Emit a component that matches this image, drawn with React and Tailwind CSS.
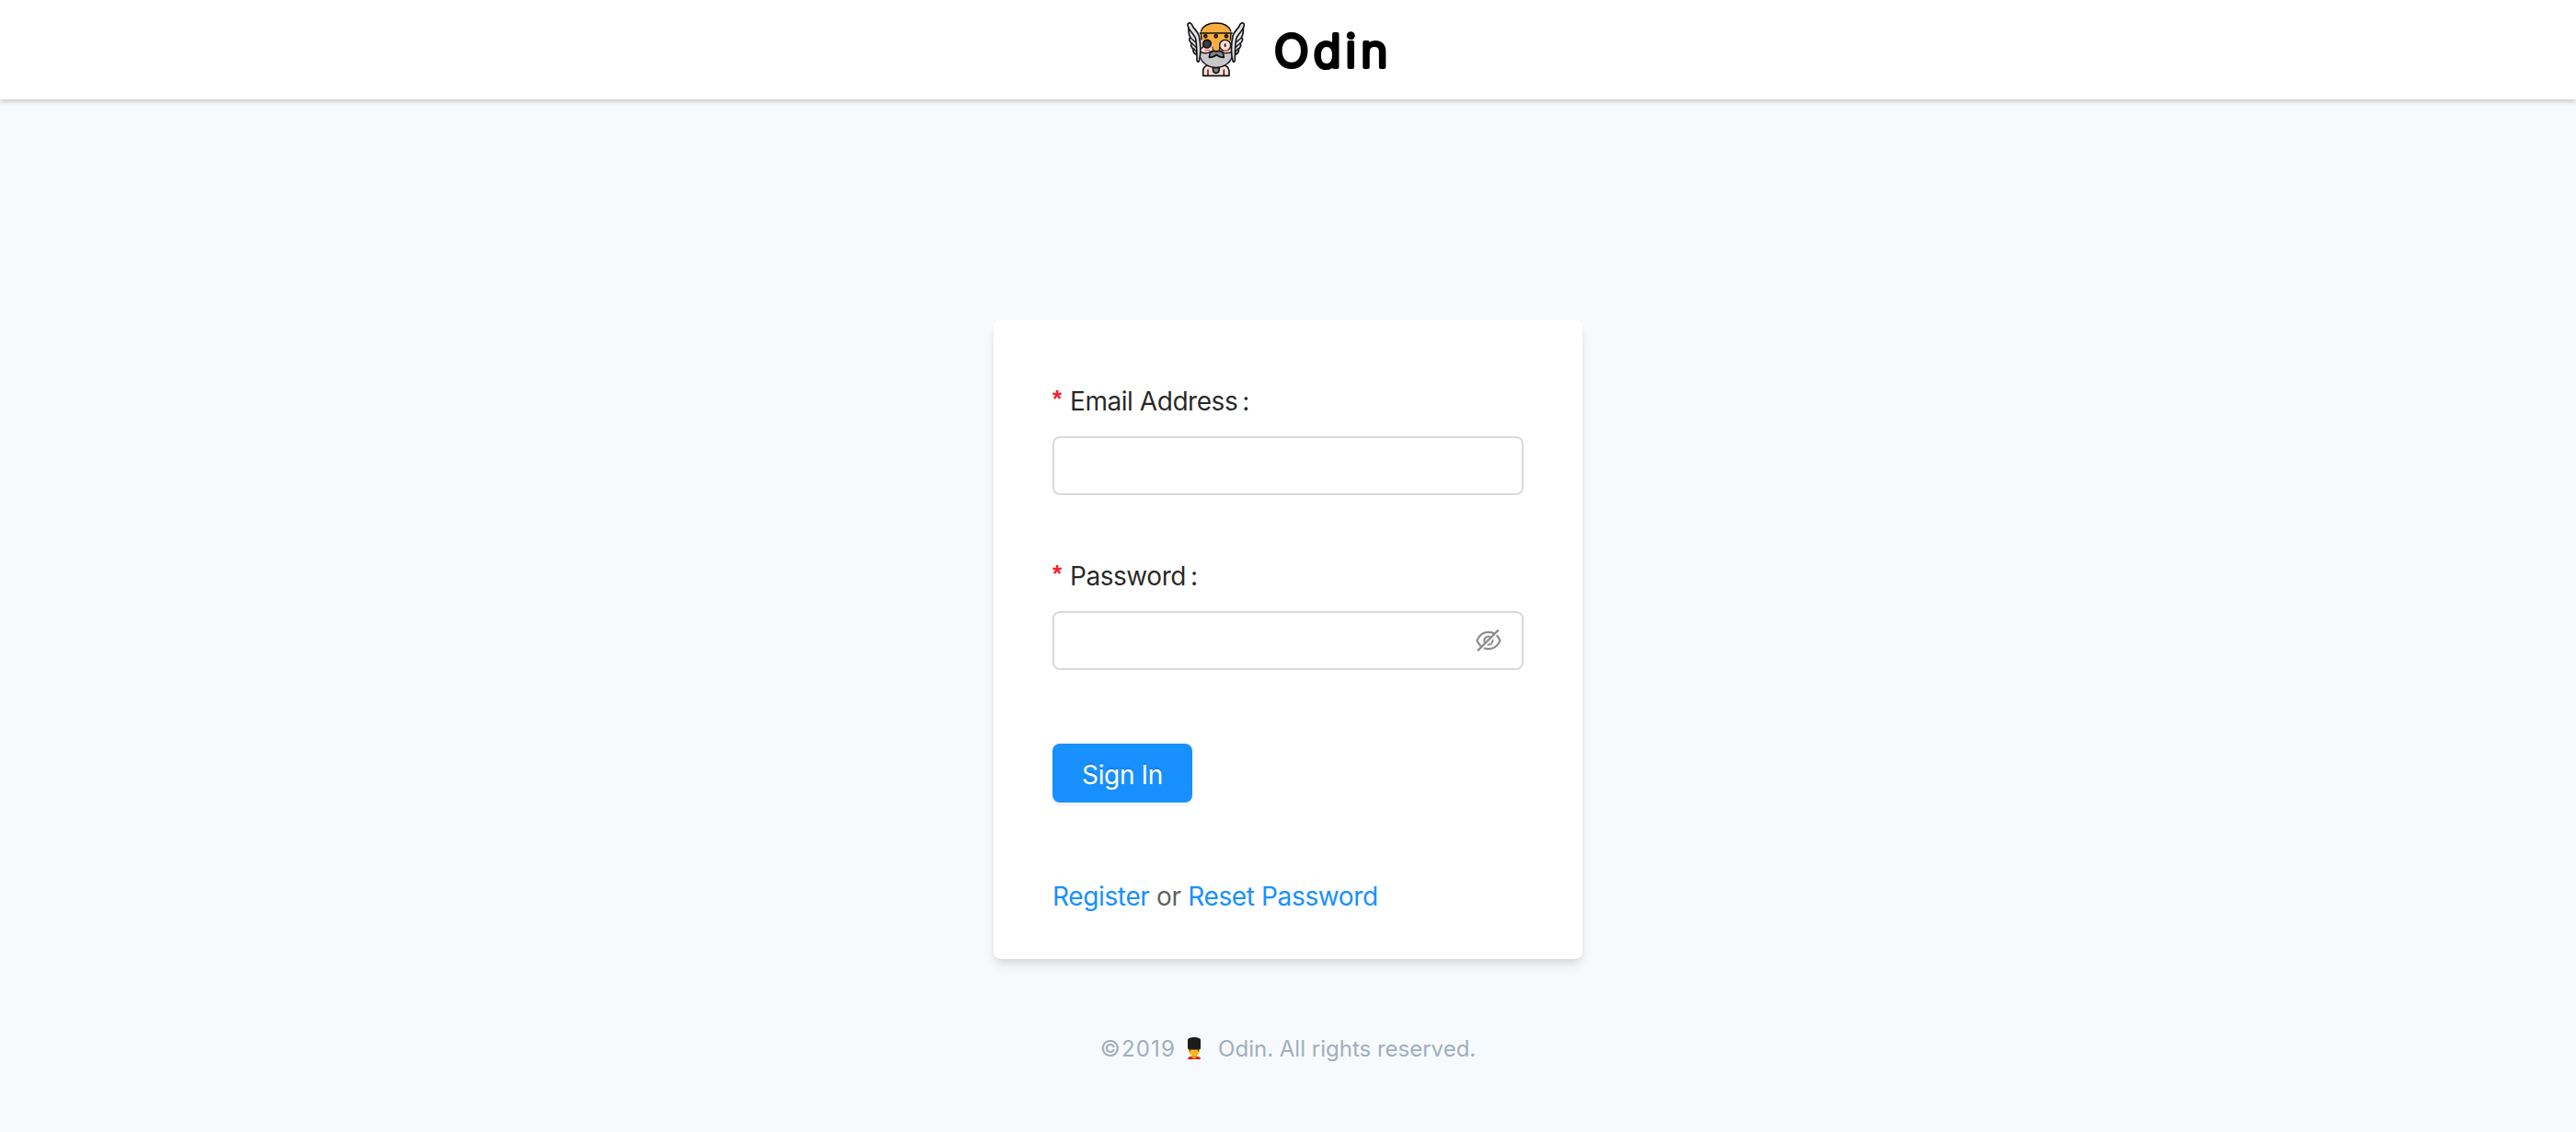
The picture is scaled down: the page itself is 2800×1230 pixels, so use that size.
import { AiOutlineEyeInvisible } from "react-icons/ai";

function Wing() {
  return (
    <g stroke="#151515" strokeWidth="5" strokeLinejoin="round" strokeLinecap="round" fill="#e4e4e8">
      <path d="M36 45 C35 58 37 70 42 78 C36 77 37 92 47 97 C41 98 44 111 53 115 C48 118 52 130 61 133 L66 100 L60 72 Z" />
      <path d="M42 78 L58 92 M47 97 L60 109 M53 115 L62 124" fill="none" strokeWidth="4" />
      <path d="M34 32 C40 27 46 31 48 38 C51 48 66 56 70 72 C75 96 76 130 70 154 C68 160 63 156 63 150 C63 124 62 100 59 82 C54 66 33 52 33 36 Z" />
    </g>
  );
}

function OdinMark() {
  return (
    <svg className="-mt-[3px]" width="80" height="75" viewBox="0 0 240 225" aria-hidden="true">
      <g stroke="#111" strokeWidth="5" strokeLinejoin="round" strokeLinecap="round">
        <path d="M83 202 V185 C84 175 91 169 100 168 H151 C160 169 167 177 168 187 V202 Z" fill="#fbdcd6" />
        <path d="M99 183 V201 M151 183 V201" strokeWidth="4" fill="none" />
        <path d="M115 176 C115 188 120 193 125 193 C131 193 136 188 136 176 Z" fill="#858585" />
        <path d="M75 62 H176 V124 C160 135 92 135 75 124 Z" fill="#fbdcd6" stroke="none" />
        <path d="M73 122 C80 128 92 129 101 127 C108 118 143 118 150 127 C160 129 171 128 178 122 V140 C170 162 149 175 125 175 C101 175 80 162 73 140 Z" fill="#c8c8ca" strokeWidth="4" />
        <path d="M75 64 C76 43 98 29 125 29 C152 29 174 43 175 64 V88 L164 89 C149 84 138 96 139 111 L141 119 H112 L115 108 C114 93 102 84 91 88 L75 84 Z" fill="#f7ad3d" stroke="none" />
        <path d="M76 57 C83 39 101 30 125 30 C149 30 167 39 174 57 M73 63 H178 M76 64 L78 84 M174 64 L172 84" fill="none" strokeWidth="4" />
        <path d="M114 108 L115 119 M137 108 L136 119" fill="none" strokeWidth="3" />
        <circle cx="155" cy="103" r="18" fill="#fbdcd6" strokeWidth="4" />
        <path d="M155 99 V106" fill="none" />
        <circle cx="96" cy="98" r="13" fill="#3d3d40" />
        <path d="M85 105 L79 112" fill="none" strokeWidth="4" />
        <path d="M103 142 C103 129 110 121 119 121 C122 121 124 122 127 123 C130 122 132 121 135 121 C144 121 151 129 151 142 C141 142 133 139 127 133 C121 139 113 142 103 142 Z" fill="#858585" />
      </g>
      <path d="M90 119 H103 M153 120 H164" stroke="#ff6d70" strokeWidth="5" strokeLinecap="round" />
      <g fill="#c9852c" stroke="#111" strokeWidth="5">
        <circle cx="91" cy="73" r="4.5" />
        <circle cx="125" cy="73" r="4.5" />
        <circle cx="159" cy="73" r="4.5" />
      </g>
      <Wing />
      <g transform="translate(250 0) scale(-1 1)">
        <Wing />
      </g>
    </svg>
  );
}

function Wordmark() {
  return (
    <svg width="140" height="60" viewBox="0 0 140 60">
      <text
        x="5"
        y="48.5"
        fontFamily="Inter, sans-serif"
        fontSize="49.5"
        fontWeight="300"
        fill="#000"
        stroke="#000"
        strokeWidth="4.2"
        strokeLinejoin="round"
        letterSpacing="5.1"
      >
        Odin
      </text>
    </svg>
  );
}

function Guard() {
  return (
    <svg className="-mt-1 ml-3 mr-[18px]" width="16" height="25" viewBox="4 0 16 25" aria-hidden="true">
      <path d="M5 25 C5 22.500 7 22 10 21.500 H14 C17 22 19 22.500 19 25 Z" fill="#d3202a" />
      <path d="M9 19 H15 L14.5 23 L12 25 L9.500 23 Z" fill="#e79a12" />
      <path d="M5.500 13 H18.500 C18.500 18 15.500 21.500 12 21.500 C8.500 21.500 5.500 18 5.500 13 Z" fill="#f9b81c" />
      <path d="M5.500 13 H18.500 L16.500 17 L15.500 14.500 H8.500 L7.500 17 Z" fill="#6d4a12" />
      <path d="M5 4 C5 0 19 0 19 4 V13.500 C15 14.700 9 14.700 5 13.500 Z" fill="#1c1c1c" />
    </svg>
  );
}

function Label({ children }) {
  return (
    <label className="flex h-11 items-center whitespace-pre pt-1 text-[28px] tracking-[-0.45px] text-black/85">
      <span className="-mt-1.5 mr-[7px] w-3 font-['Liberation_Sans',sans-serif] text-[26px] font-bold text-[#f5222d]">*</span>
      <span>{children}</span>
      <span className="ml-[5px]">:</span>
    </label>
  );
}

const field = "mt-[18px] flex h-16 items-center justify-end rounded-lg border-2 border-[#d9d9d9] bg-white px-5";

export default function App() {
  return (
    <div className="flex h-[1230px] flex-col items-center bg-[#f7fafc] font-[Inter,sans-serif]">
      <header className="flex h-[108px] w-full shrink-0 items-center justify-center bg-white shadow-[0_2px_6px_rgba(0,0,0,0.12),0_2px_4px_rgba(0,0,0,0.1)]">
        <div className="flex w-[240px] items-center justify-between">
          <OdinMark />
          <Wordmark />
        </div>
      </header>

      <main className="mt-60 h-[694px] w-[640px] rounded-lg bg-white px-16 pt-16 shadow-[0_8px_12px_-2px_rgba(0,0,0,0.1),0_4px_8px_-2px_rgba(0,0,0,0.06)]">
        <Label>Email Address</Label>
        <div className={field} />
        <div className="mt-16">
          <Label>Password</Label>
        </div>
        <div className={field}>
          <AiOutlineEyeInvisible className="size-8 text-black/45" />
        </div>
        <button className="mt-20 flex h-16 w-[152px] items-center justify-center rounded-lg bg-[#1890ff] pt-1 text-[28px] tracking-[-0.35px] text-white shadow-[0_4px_0_rgba(0,0,0,0.045)] [text-shadow:0_-2px_0_rgba(0,0,0,0.12)]">
          Sign In
        </button>
        <p className="mt-20 text-[28px] leading-[44px] tracking-[-0.36px] text-black/65">
          <a className="text-[#1890ff]">Register</a> or <a className="text-[#1890ff]">Reset Password</a>
        </p>
      </main>

      <footer className="mt-20 flex h-9 items-center text-2xl text-[#a0aec0]">
        <span className="tracking-[1.2px]">©2019</span>
        <Guard />
        <span>Odin. All rights reserved.</span>
      </footer>
    </div>
  );
}
